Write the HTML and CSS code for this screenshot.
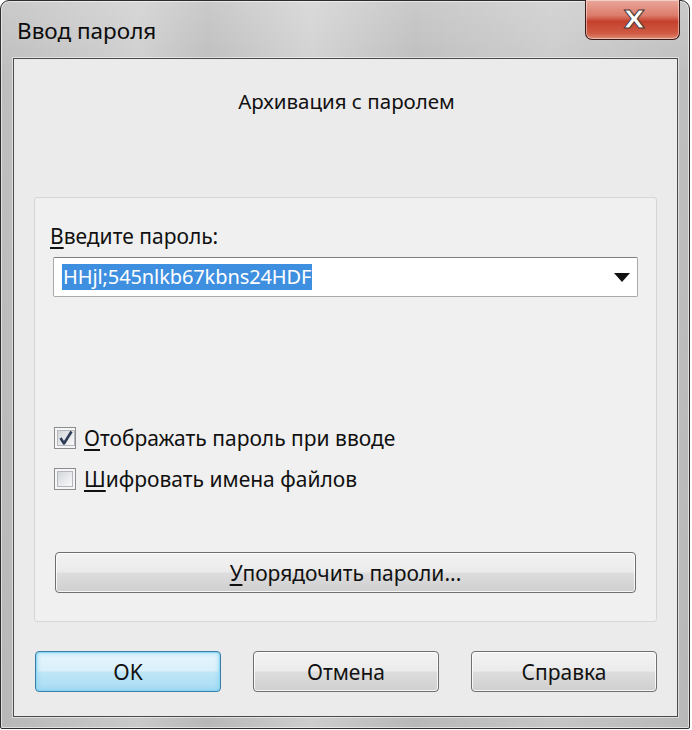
FILE: index.html
```html
<!DOCTYPE html>
<html lang="ru">
<head>
<meta charset="utf-8">
<title>Ввод пароля</title>
<link rel="stylesheet" href="styles.css">
</head>
<body>
<div class="window">
  <div class="titlebar">
    <div class="title">Ввод пароля</div>
    <div class="close"><span class="close-x">X</span></div>
  </div>
  <div class="client">
    <div class="header">Архивация с паролем</div>
    <div class="panel">
      <div class="label"><u>В</u>ведите пароль:</div>
      <div class="combo">
        <span class="sel">HHjl;545nlkb67kbns24HDF</span>
        <svg class="arrow" width="16" height="9" viewBox="0 0 16 9"><path d="M0 0H16L8 9Z" fill="#111"/></svg>
      </div>
      <div class="checks">
        <label class="check">
          <span class="box"><span class="inner">
            <svg width="16" height="16" viewBox="0 0 16 16"><path d="M2.5 8L6 13.5L13.5 1.5" fill="none" stroke="#2f3d57" stroke-width="2.6" stroke-linejoin="round"/></svg>
          </span></span>
          <span><u>О</u>тображать пароль при вводе</span>
        </label>
        <label class="check">
          <span class="box"><span class="inner"></span></span>
          <span><u>Ш</u>ифровать имена файлов</span>
        </label>
      </div>
      <div class="btn wide"><span><u>У</u>порядочить пароли...</span></div>
    </div>
    <div class="buttons">
      <div class="btn default">OK</div>
      <div class="btn">Отмена</div>
      <div class="btn">Справка</div>
    </div>
  </div>
</div>
</body>
</html>
```
FILE: styles.css
```css
* { box-sizing: border-box; }
html, body {
  margin: 0;
  padding: 0;
  background: #ffffff;
}
body {
  font-family: "Noto Sans", "Open Sans", sans-serif;
  color: #111111;
}
.window {
  width: 690px;
  height: 729px;
  border: 1px solid #2c2c2c;
  border-radius: 9px 9px 2px 2px;
  background:
    linear-gradient(90deg, rgba(255,255,255,0) 0%, rgba(255,255,255,0.25) 20%, rgba(255,255,255,0) 30%, rgba(255,255,255,0.3) 45%, rgba(255,255,255,0) 60%, rgba(255,255,255,0.2) 80%, rgba(255,255,255,0) 100%),
    linear-gradient(180deg, #cacaca 0%, #bebebe 10%, #b8b8b8 100%);
  padding: 0 11px 11px 12px;
  display: flex;
  flex-direction: column;
  box-shadow: inset 0 0 0 1px rgba(255,255,255,0.55);
}
.titlebar {
  height: 57px;
  display: flex;
  justify-content: space-between;
  align-items: flex-start;
}
.title {
  font-size: 22.5px;
  line-height: 28px;
  margin-top: 16px;
  margin-left: 4px;
  color: #0c0c0c;
}
.close {
  width: 95px;
  height: 40px;
  margin-right: -2px;
  margin-top: -1px;
  border: 1px solid #3a1a16;
  border-top: none;
  border-radius: 0 0 7px 7px;
  background: linear-gradient(180deg, #e9a89b 0%, #dc7b6b 40%, #c5402c 55%, #cf5a44 85%, #e08a72 100%);
  box-shadow: inset 0 0 0 1px rgba(255,255,255,0.45);
  display: flex;
  justify-content: center;
  align-items: center;
}
.close-x {
  font-family: "DejaVu Sans", sans-serif;
  font-weight: bold;
  font-size: 24px;
  line-height: 24px;
  color: #fff;
  -webkit-text-stroke: 1px #4a3a36;
  margin-top: 0;
  margin-left: 3px;
  display: inline-block;
  transform: scaleX(1.15);
}
.client {
  flex: 1;
  border: 1px solid #4b4b4b;
  background: #ebebeb;
  display: flex;
  flex-direction: column;
  box-shadow: 0 0 0 1px rgba(255,255,255,0.5);
}
.header {
  height: 138px;
  padding-top: 28px;
  text-align: center;
  font-size: 20.5px;
  line-height: 28px;
  padding-left: 2px;
}
.panel {
  margin: 0 20px;
  height: 425px;
  border: 1px solid #d6d6d6;
  border-radius: 3px;
  background: #f0f0f0;
  padding: 25px 18px 0 18px;
  display: flex;
  flex-direction: column;
  font-size: 21px;
}
.label {
  line-height: 26px;
  margin-left: -3px;
}
.combo {
  margin-top: 8px;
  height: 40px;
  border: 1px solid #a9a9a9;
  border-top-color: #7d7d7d;
  border-radius: 2px;
  background: #fff;
  display: flex;
  align-items: center;
  justify-content: space-between;
  padding: 0 7px 0 8px;
}
.sel {
  background: #3f8fe0;
  color: #fff;
  line-height: 26px;
  height: 26px;
  padding: 0 1px;
  font-size: 20px;
  letter-spacing: -0.1px;
}
.arrow { display: block; }
.checks {
  margin-top: 128px;
  display: flex;
  flex-direction: column;
  gap: 15px;
}
.check {
  display: flex;
  align-items: center;
  gap: 8px;
  line-height: 26px;
  padding-left: 1px;
}
.box {
  width: 22px;
  height: 22px;
  border: 1px solid #8b8c8e;
  background: #f6f6f6;
  padding: 2px;
  display: flex;
}
.inner {
  flex: 1;
  border: 1px solid #b4b8be;
  background: linear-gradient(135deg, #d3d6da 0%, #eceef0 65%, #f8f8f8 100%);
  display: flex;
  justify-content: center;
  align-items: center;
}
.btn {
  height: 41px;
  border: 1px solid #6f6f6f;
  border-radius: 4px;
  background: linear-gradient(180deg, #f3f3f3 0%, #ebebeb 48%, #dddddd 52%, #cfcfcf 100%);
  box-shadow: inset 0 0 0 1px rgba(255,255,255,0.8);
  display: flex;
  justify-content: center;
  align-items: center;
  font-size: 21px;
  line-height: 26px;
}
.btn.wide {
  margin-top: 60px;
  margin-left: 2px;
  margin-right: 2px;
}
.buttons {
  display: grid;
  grid-template-columns: 186px 186px 186px;
  column-gap: 32px;
  padding: 29px 20px 0 21px;
}
.btn.default {
  border-color: #3b7ea6;
  background: linear-gradient(180deg, #e6f5fc 0%, #d9f0fa 48%, #bee6f7 52%, #a9dbf2 100%);
  box-shadow: inset 0 0 0 1px #8fd6f2, inset 0 0 4px 1px rgba(120,210,245,0.8);
}
u { text-decoration-thickness: 2px; text-underline-offset: 3px; }
```
